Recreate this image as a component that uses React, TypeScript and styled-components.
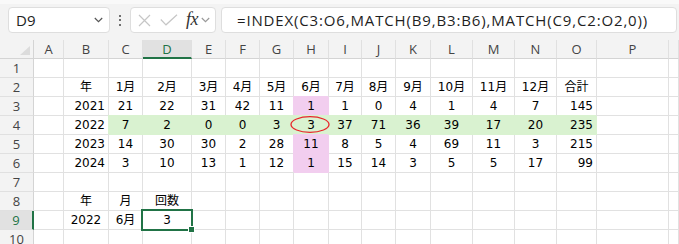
import React from "react";
import styled, { createGlobalStyle } from "styled-components";

const Global = createGlobalStyle`
  html, body { margin: 0; padding: 0; background: #ffffff; }
  body { font-family: "Open Sans", "Noto Sans", sans-serif; }
  #root { width: 679px; height: 244px; overflow: hidden; }
`;

const GREEN = "#d9f2d0";
const PINK = "#f2ceef";
const ACCENT = "#217346";

const COLS = [34, 30, 45, 34, 49, 34, 34, 34, 35, 33, 34, 35, 42, 42, 42, 40, 72, 10];
const LETTERS = ["A", "B", "C", "D", "E", "F", "G", "H", "I", "J", "K", "L", "M", "N", "O", "P", ""];

const Root = styled.div`
  width: 679px;
  height: 244px;
  overflow: hidden;
  background: #f3f3f3;
`;

const Bar = styled.div`
  box-sizing: border-box;
  height: 40px;
  border-top: 4px solid #f9f9f9;
  padding: 3px 0 0 8px;
  display: flex;
  align-items: flex-start;
  background: #f3f3f3;
`;

const Box = styled.div`
  box-sizing: border-box;
  height: 26px;
  background: #ffffff;
  border: 1px solid #dedede;
  border-radius: 4px;
  display: flex;
  align-items: center;
`;

const NameBox = styled(Box)`
  width: 102px;
  padding: 0 6px 0 7px;
  justify-content: space-between;
  font-size: 15px;
  color: #222;
`;

const Dots = styled.div`
  width: 20px;
  height: 26px;
  display: flex;
  flex-direction: column;
  align-items: center;
  justify-content: center;
  gap: 2.5px;
  span {
    width: 2px;
    height: 2px;
    border-radius: 1px;
    background: #444;
  }
`;

const FxBox = styled(Box)`
  width: 86px;
  padding: 0 4px 0 7px;
`;

const FxText = styled.span`
  font-family: "Liberation Serif", "DejaVu Serif", serif;
  font-style: italic;
  font-size: 18px;
  color: #333;
  margin: -2px 3px 0 8px;
  letter-spacing: -0.5px;
`;

const FormulaBox = styled(Box)`
  flex: 1;
  margin-left: 5px;
  margin-right: 2px;
  padding-left: 15px;
  font-size: 15px;
  letter-spacing: 0.85px;
  color: #1f1f1f;
  white-space: nowrap;
  overflow: hidden;
`;

const Sheet = styled.div`
  display: grid;
  grid-template-columns: ${COLS.map((c) => `${c}px`).join(" ")};
  grid-auto-rows: 19px;
  background: #ffffff;
`;

const Corner = styled.div`
  box-sizing: border-box;
  background: #f3f3f3;
  border-right: 1px solid #d4d4d4;
  border-bottom: 1px solid #d4d4d4;
  position: relative;
  &::after {
    content: "";
    position: absolute;
    right: 3px;
    bottom: 3px;
    width: 0;
    height: 0;
    border-left: 10px solid transparent;
    border-bottom: 9px solid #dcdcdc;
  }
`;

const ColHead = styled.div<{ $active?: boolean }>`
  box-sizing: border-box;
  background: ${(p) => (p.$active ? "#e1e1e1" : "#f3f3f3")};
  border-right: 1px solid #e0e0e0;
  border-bottom: ${(p) => (p.$active ? `2px solid ${ACCENT}` : "1px solid #d4d4d4")};
  color: ${(p) => (p.$active ? ACCENT : "#444")};
  font-size: 13px;
  line-height: 18px;
  text-align: center;
`;

const RowHead = styled.div<{ $active?: boolean }>`
  box-sizing: border-box;
  background: ${(p) => (p.$active ? "#e1e1e1" : "#f3f3f3")};
  border-right: ${(p) => (p.$active ? `2px solid ${ACCENT}` : "1px solid #d4d4d4")};
  border-bottom: 1px solid #e0e0e0;
  color: ${(p) => (p.$active ? ACCENT : "#444")};
  font-size: 13px;
  line-height: 18px;
  text-align: center;
`;

const Cell = styled.div<{ $align: "left" | "center" | "right"; $fill?: string }>`
  box-sizing: border-box;
  position: relative;
  padding: 0 3px;
  border-right: 1px solid ${(p) => p.$fill ?? "#e1e1e1"};
  border-bottom: 1px solid ${(p) => p.$fill ?? "#e1e1e1"};
  background: ${(p) => p.$fill ?? "#ffffff"};
  box-shadow: ${(p) => (p.$fill ? `-1px -1px 0 0 ${p.$fill}` : "none")};
  font-family: "DejaVu Sans", "Noto Sans CJK JP", sans-serif;
  font-size: 12px;
  line-height: 19px;
  color: #000;
  text-align: ${(p) => p.$align};
  white-space: nowrap;
`;

const Selection = styled.div`
  position: absolute;
  z-index: 3;
  left: -2px;
  top: -2px;
  width: 52px;
  height: 22px;
  box-sizing: border-box;
  border: 2px solid ${ACCENT};
  pointer-events: none;
  &::after {
    content: "";
    position: absolute;
    left: 45px;
    top: 15px;
    width: 5px;
    height: 5px;
    background: ${ACCENT};
    border: 1px solid #ffffff;
  }
`;

const Ring = styled.svg`
  position: absolute;
  z-index: 3;
  left: -6px;
  top: -1px;
  overflow: visible;
  pointer-events: none;
`;

type Align = "left" | "center" | "right";
type CellDef = { v?: string; a?: Align; fill?: string; sel?: boolean; ring?: boolean };

const months = ["1月", "2月", "3月", "4月", "5月", "6月", "7月", "8月", "9月", "10月", "11月", "12月"];

const data: Record<number, number[]> = {
  2021: [21, 22, 31, 42, 11, 1, 1, 0, 4, 1, 4, 7, 145],
  2022: [7, 2, 0, 0, 3, 3, 37, 71, 36, 39, 17, 20, 235],
  2023: [14, 30, 30, 2, 28, 11, 8, 5, 4, 69, 11, 3, 215],
  2024: [3, 10, 13, 1, 12, 1, 15, 14, 3, 5, 5, 17, 99],
};

function buildRows(): CellDef[][] {
  const rows: CellDef[][] = [];
  const blank = (): CellDef[] => LETTERS.map(() => ({}));
  rows.push(blank());
  const r2 = blank();
  r2[1] = { v: "年", a: "center" };
  months.forEach((m, i) => (r2[2 + i] = { v: m, a: "center" }));
  r2[14] = { v: "合計", a: "center" };
  rows.push(r2);
  [2021, 2022, 2023, 2024].forEach((y) => {
    const r = blank();
    r[1] = { v: String(y), a: "right" };
    data[y].forEach((n, i) => {
      const col = 2 + i;
      let fill: string | undefined;
      if (y === 2022) fill = GREEN;
      else if (col === 7) fill = PINK;
      r[col] = { v: String(n), a: col === 14 ? "right" : "center", fill, ring: y === 2022 && col === 7 };
    });
    rows.push(r);
  });
  rows.push(blank());
  const r8 = blank();
  r8[1] = { v: "年", a: "center" };
  r8[2] = { v: "月", a: "center" };
  r8[3] = { v: "回数", a: "center" };
  rows.push(r8);
  const r9 = blank();
  r9[1] = { v: "2022", a: "center" };
  r9[2] = { v: "6月", a: "center" };
  r9[3] = { v: "3", a: "center", sel: true };
  rows.push(r9);
  rows.push(blank());
  return rows;
}

const rows = buildRows();

const Chevron = ({ color }: { color: string }) => (
  <svg width="9" height="6" viewBox="0 0 9 6">
    <path d="M0.8 1 L4.5 4.6 L8.2 1" fill="none" stroke={color} strokeWidth="1.2" />
  </svg>
);

export default function App() {
  return (
    <Root>
      <Global />
      <Bar>
        <NameBox>
          <span>D9</span>
          <Chevron color="#555" />
        </NameBox>
        <Dots>
          <span />
          <span />
          <span />
        </Dots>
        <FxBox>
          <svg width="13" height="13" viewBox="0 0 13 13">
            <path d="M1 1 L12 12 M12 1 L1 12" stroke="#c6c6c6" strokeWidth="1.2" fill="none" />
          </svg>
          <svg width="18" height="12" viewBox="0 0 18 12" style={{ marginLeft: 9 }}>
            <path d="M0.8 5.5 L6 10.8 L17 0.8" stroke="#c6c6c6" strokeWidth="1.2" fill="none" />
          </svg>
          <FxText>fx</FxText>
          <Chevron color="#9a9a9a" />
        </FxBox>
        <FormulaBox>=INDEX(C3:O6,MATCH(B9,B3:B6),MATCH(C9,C2:O2,0))</FormulaBox>
      </Bar>
      <Sheet>
        <Corner />
        {LETTERS.map((l, i) => (
          <ColHead key={i} $active={l === "D"}>
            {l}
          </ColHead>
        ))}
        {rows.map((r, ri) => (
          <React.Fragment key={ri}>
            <RowHead $active={ri === 8}>{ri + 1}</RowHead>
            {r.map((c, ci) => (
              <Cell key={ci} $align={c.a ?? "left"} $fill={c.fill}>
                {c.v}
                {c.ring && (
                  <Ring width="46" height="20" viewBox="0 0 46 20">
                    <ellipse cx="22" cy="9.5" rx="19" ry="7.8" fill="none" stroke="#e8262a" strokeWidth="1.3" />
                  </Ring>
                )}
                {c.sel && <Selection />}
              </Cell>
            ))}
          </React.Fragment>
        ))}
      </Sheet>
    </Root>
  );
}
